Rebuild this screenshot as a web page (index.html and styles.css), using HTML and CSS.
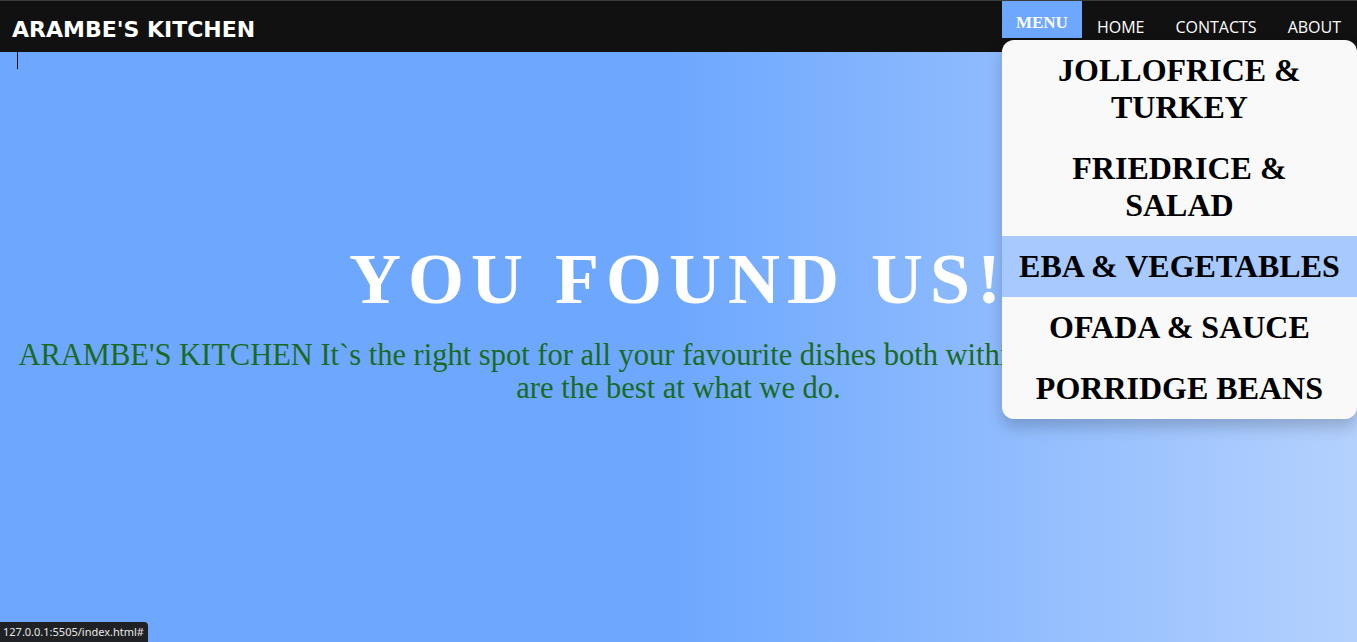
FILE: index.html
```html
<!DOCTYPE html>
<html lang="en">
<head>
<meta charset="utf-8">
<title>Arambe's Kitchen</title>
<link rel="stylesheet" href="styles.css">
</head>
<body>
<header class="topbar">
  <div class="logo">ARAMBE'S KITCHEN</div>
  <nav class="nav">
    <div class="menu-wrap">
      <a class="menu-btn" href="#">MENU</a>
      <div class="dropdown">
        <a class="dd-item" href="#">JOLLOFRICE &amp; TURKEY</a>
        <a class="dd-item" href="#">FRIEDRICE &amp; SALAD</a>
        <a class="dd-item active" href="#">EBA &amp; VEGETABLES</a>
        <a class="dd-item" href="#">OFADA &amp; SAUCE</a>
        <a class="dd-item" href="#">PORRIDGE BEANS</a>
      </div>
    </div>
    <a class="nav-link" href="#">HOME</a>
    <a class="nav-link" href="#">CONTACTS</a>
    <a class="nav-link" href="#">ABOUT</a>
  </nav>
</header>
<main class="hero">
  <div class="caret"></div>
  <h1 class="title">YOU FOUND US!</h1>
  <p class="intro">ARAMBE'S KITCHEN It`s the right spot for all your favourite dishes both within and outside of Africa, we are the best at what we do.</p>
</main>
<div class="status">127.0.0.1:5505/index.html#</div>
</body>
</html>
```

FILE: styles.css
```css
html, body {
  margin: 0;
  padding: 0;
  height: 100%;
}
body {
  background: linear-gradient(to right, #6ea8fe 0%, #6ea8fe 50%, #b4d1fe 100%);
  overflow: hidden;
  position: relative;
}
.topbar {
  height: 51px;
  background: #111111;
  border-top: 1px solid #3a3a3a;
  display: flex;
  justify-content: space-between;
  align-items: flex-start;
}
.logo {
  font-family: "Comic Sans MS", "DejaVu Sans", sans-serif;
  font-weight: bold;
  font-size: 22px;
  color: #ffffff;
  padding: 16px 0 0 12px;
}
.nav {
  display: flex;
  align-items: flex-start;
}
.menu-wrap {
  position: relative;
}
.menu-btn {
  display: block;
  background: #6ea8fe;
  color: #ffffff;
  font-family: "Liberation Serif", serif;
  font-weight: bold;
  font-size: 17px;
  line-height: 20px;
  width: 80px;
  height: 37px;
  box-sizing: border-box;
  text-align: center;
  padding-top: 12px;
  text-decoration: none;
}
.nav-link {
  font-family: "Open Sans", "Noto Sans", sans-serif;
  font-size: 16px;
  color: #ffffff;
  text-decoration: none;
  padding: 16px 16px 0 15px;
  line-height: 20px;
}
.dropdown {
  position: absolute;
  top: 39px;
  left: 0;
  width: 355px;
  background: #f9f9f9;
  border-radius: 12px;
  box-shadow: 0 8px 16px rgba(0, 0, 0, 0.2);
  display: flex;
  flex-direction: column;
  overflow: hidden;
  z-index: 5;
}
.dd-item {
  font-family: "Liberation Serif", serif;
  font-weight: bold;
  font-size: 32px;
  line-height: 37px;
  color: #000000;
  text-align: center;
  text-decoration: none;
  padding: 12px 14px;
}
.dd-item.active {
  background: #a8c9fe;
}
.caret {
  width: 1px;
  height: 17px;
  background: #000000;
  margin-left: 17px;
}
.title {
  margin: 170px 0 0;
  text-align: center;
  font-family: "Liberation Serif", serif;
  font-weight: bold;
  font-size: 72px;
  letter-spacing: 7px;
  line-height: 80px;
  color: #ffffff;
}
.intro {
  margin: 20px 8px 0;
  text-align: center;
  font-family: "Liberation Serif", serif;
  font-size: 30.5px;
  line-height: 33px;
  color: #1a6b22;
}
.status {
  position: absolute;
  left: 0;
  bottom: 0;
  background: #202124;
  color: #e8e8e8;
  font-family: "Noto Sans", "Open Sans", sans-serif;
  font-size: 11px;
  line-height: 20px;
  padding: 0 4px 0 3px;
  border-top-right-radius: 4px;
}
```
